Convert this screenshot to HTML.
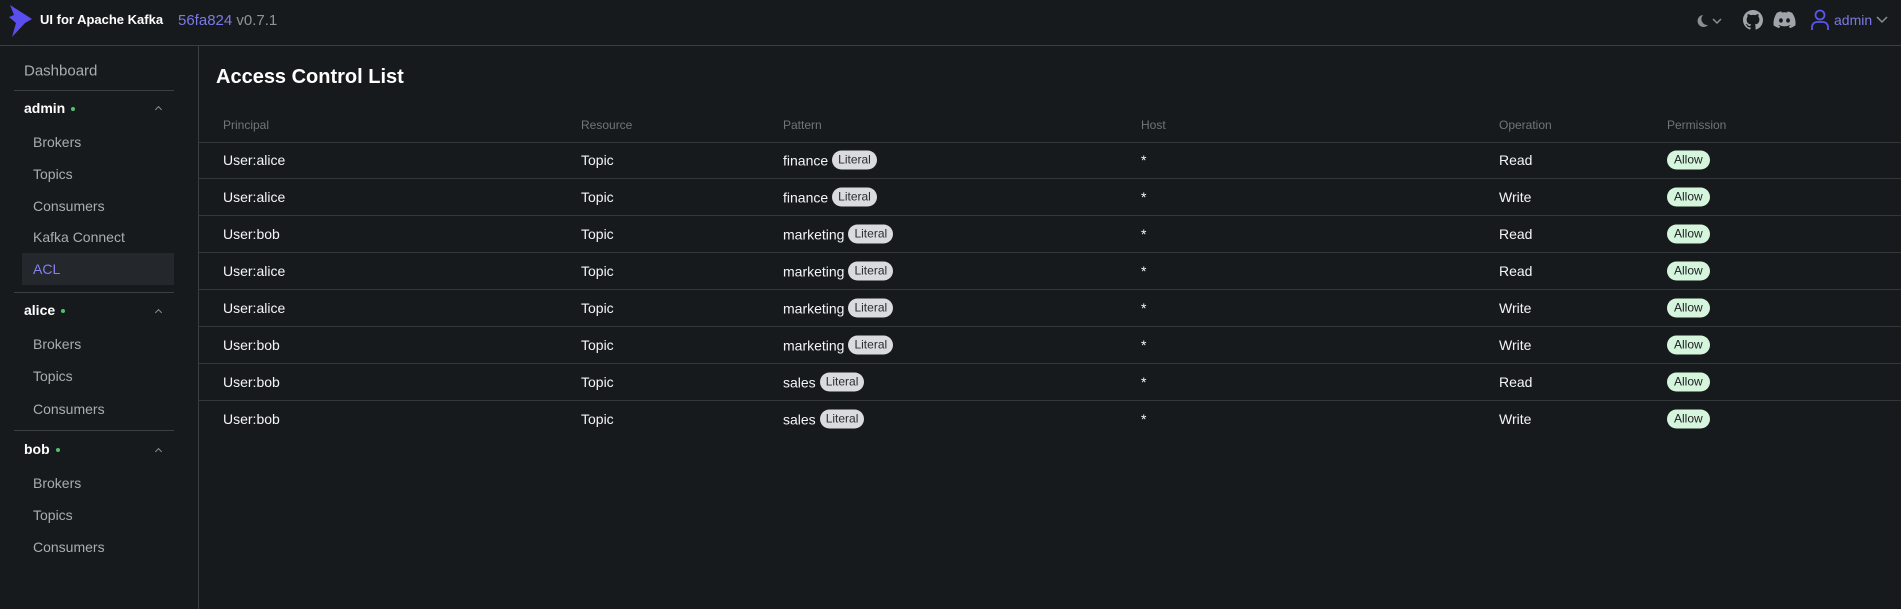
<!DOCTYPE html>
<html><head><meta charset="utf-8"><style>
*{box-sizing:border-box;margin:0;padding:0}
body{width:1901px;height:609px;overflow:hidden;background:#171a1c;font-family:"Liberation Sans",sans-serif;color:#f1f2f3;position:relative}
.hdr{position:absolute;left:0;top:0;width:1901px;height:46px;border-bottom:1px solid #3b3f43}
.abs{position:absolute;white-space:nowrap}
.side{position:absolute;left:0;top:46px;width:199px;height:563px;border-right:1px solid #3b3f43}
.si{position:absolute;left:33px;font-size:14px;color:#a8adb3;transform:translateY(-50%)}
.grp{position:absolute;left:24px;font-size:14px;font-weight:bold;color:#fff;transform:translateY(-50%)}
.dot{display:inline-block;width:4px;height:4px;border-radius:50%;background:#4fc26b;margin-left:6px;vertical-align:middle}
.div{position:absolute;left:14px;width:160px;height:1px;background:#3b3f43}
.car{position:absolute;left:156px;width:5px;height:5px;border-left:1px solid #8a8f95;border-top:1px solid #8a8f95;transform:rotate(45deg)}
.th{position:absolute;top:125px;font-size:12px;color:#6f757b;transform:translateY(-50%)}
.line{position:absolute;left:199px;width:1702px;height:1px;background:#33373b}
.td{position:absolute;font-size:14px;color:#f4f5f6;transform:translateY(-50%);white-space:nowrap;display:flex;align-items:center}
.lit{display:inline-block;background:#d9dbde;color:#2a2d30;font-size:12px;border-radius:10px;padding:2px 6px;margin-left:4px;line-height:15px}
.allow{display:inline-block;background:#d5f5dd;color:#1b1e21;font-size:12px;border-radius:10px;padding:2px 7px;line-height:15px}
</style></head><body>
<div class="hdr">
<svg class="abs" style="left:8px;top:5px" width="26" height="32" viewBox="0 0 26 32"><path d="M2 0 L24 14 L17 18 L4 32 L8 18 L1 12 L6 10 Z" fill="#5b4ef0"/></svg>
<div class="abs" style="left:40px;top:12px;font-size:13px;font-weight:bold;color:#fff">UI for Apache Kafka</div>
<div class="abs" style="left:178px;top:12px;font-size:15px;color:#7b79e6">56fa824 <span style="color:#8f949a">v0.7.1</span></div>
<svg class="abs" style="left:1693px;top:12px" width="32" height="18" viewBox="0 0 32 18"><path d="M10 3 A6 6 0 1 0 15 13 A6 6 0 0 1 10 3Z" fill="#8a8f95"/><path d="M20 7 L24 11 L28 7" stroke="#8a8f95" stroke-width="1.5" fill="none"/></svg>
<svg class="abs" style="left:1743px;top:10px" width="20" height="20" viewBox="0 0 16 16"><path fill="#a0a5ab" d="M8 0C3.58 0 0 3.58 0 8c0 3.54 2.29 6.53 5.47 7.59.4.07.55-.17.55-.38 0-.19-.01-.82-.01-1.49-2.01.37-2.530-.49-2.690-.94-.09-.23-.48-.94-.82-1.13-.28-.15-.68-.52-.01-.53.63-.01 1.08.58 1.23.82.72 1.21 1.87.87 2.33.66.07-.52.28-.87.51-1.07-1.78-.2-3.64-.89-3.64-3.95 0-.87.31-1.59.82-2.15-.08-.2-.36-1.02.08-2.12 0 0 .67-.21 2.2.82.64-.18 1.32-.27 2-.27.68 0 1.36.09 2 .27 1.53-1.04 2.2-.82 2.2-.82.44 1.1.16 1.92.08 2.12.51.56.82 1.27.82 2.15 0 3.07-1.87 3.75-3.65 3.95.29.25.54.73.54 1.48 0 1.07-.01 1.93-.01 2.2 0 .21.15.46.55.38A8.013 8.013 0 0016 8c0-4.42-3.58-8-8-8z"/></svg>
<svg class="abs" style="left:1773px;top:11px" width="23" height="18" viewBox="0 0 24 18"><path fill="#a0a5ab" d="M20 1.5A19 19 0 0015.4 0l-.6 1.2a17 17 0 00-5.6 0L8.6 0A19 19 0 004 1.5C1 6 .3 10.3.6 14.6A19 19 0 006.3 17.5l1.2-2a12 12 0 01-1.9-.9l.5-.4a13.5 13.5 0 0011.8 0l.5.4a12 12 0 01-1.9.9l1.2 2a19 19 0 005.7-2.9C24 9.6 22.8 5.5 20 1.5zM8.3 11.8c-1.1 0-2-1-2-2.3s.9-2.3 2-2.3 2 1 2 2.3-.9 2.3-2 2.3zm7.4 0c-1.1 0-2-1-2-2.3s.9-2.3 2-2.3 2 1 2 2.3-.9 2.3-2 2.3z"/></svg>
<svg class="abs" style="left:1810px;top:9px" width="20" height="22" viewBox="0 0 20 22"><circle cx="10" cy="6" r="4.5" stroke="#5a55f0" stroke-width="1.8" fill="none"/><path d="M2 21 V18 A5 5 0 0 1 7 13 H13 A5 5 0 0 1 18 18 V21" stroke="#5a55f0" stroke-width="1.8" fill="none"/></svg>
<div class="abs" style="left:1834px;top:12px;font-size:14px;color:#7b79e6">admin</div>
<svg class="abs" style="left:1876px;top:16px" width="12" height="8" viewBox="0 0 12 8"><path d="M1 1 L6 6 L11 1" stroke="#8a8f95" stroke-width="1.5" fill="none"/></svg>
</div>
<div class="side">
<div class="si" style="left:24px;top:25px;font-size:15px">Dashboard</div>
<div class="div" style="top:44px"></div>
<div class="grp" style="top:62px">admin<span class="dot"></span></div><div class="car" style="top:61px"></div>
<div class="si" style="top:96px">Brokers</div>
<div class="si" style="top:128px">Topics</div>
<div class="si" style="top:160px">Consumers</div>
<div class="si" style="top:191px">Kafka Connect</div>
<div style="position:absolute;left:22px;top:207px;width:152px;height:32px;background:#24272b"></div>
<div class="si" style="top:223px;color:#8583ee">ACL</div>
<div class="div" style="top:246px"></div>
<div class="grp" style="top:264px">alice<span class="dot"></span></div><div class="car" style="top:264px"></div>
<div class="si" style="top:298px">Brokers</div>
<div class="si" style="top:330px">Topics</div>
<div class="si" style="top:363px">Consumers</div>
<div class="div" style="top:384px"></div>
<div class="grp" style="top:403px">bob<span class="dot"></span></div><div class="car" style="top:403px"></div>
<div class="si" style="top:437px">Brokers</div>
<div class="si" style="top:469px">Topics</div>
<div class="si" style="top:501px">Consumers</div>
</div>
<div class="abs" style="left:216px;top:66px;font-size:20px;font-weight:bold;color:#fff">Access Control List</div>
<div class="th" style="left:223px">Principal</div>
<div class="th" style="left:581px">Resource</div>
<div class="th" style="left:783px">Pattern</div>
<div class="th" style="left:1141px">Host</div>
<div class="th" style="left:1499px">Operation</div>
<div class="th" style="left:1667px">Permission</div>
<div class="line" style="top:142px"></div>
<div id="rows"></div>
<script>
var d=[["User:alice","finance","Read"],["User:alice","finance","Write"],["User:bob","marketing","Read"],["User:alice","marketing","Read"],["User:alice","marketing","Write"],["User:bob","marketing","Write"],["User:bob","sales","Read"],["User:bob","sales","Write"]];
var h="";d.forEach(function(r,i){var y=160+i*37;
h+='<div class="td" style="left:223px;top:'+y+'px">'+r[0]+'</div><div class="td" style="left:581px;top:'+y+'px">Topic</div><div class="td" style="left:783px;top:'+y+'px">'+r[1]+'<span class="lit">Literal</span></div><div class="td" style="left:1141px;top:'+y+'px">*</div><div class="td" style="left:1499px;top:'+y+'px">'+r[2]+'</div><div class="td" style="left:1667px;top:'+y+'px"><span class="allow">Allow</span></div>';
if(i<7)h+='<div class="line" style="top:'+(y+18)+'px"></div>';});
document.getElementById("rows").innerHTML=h;
</script>
</body></html>
